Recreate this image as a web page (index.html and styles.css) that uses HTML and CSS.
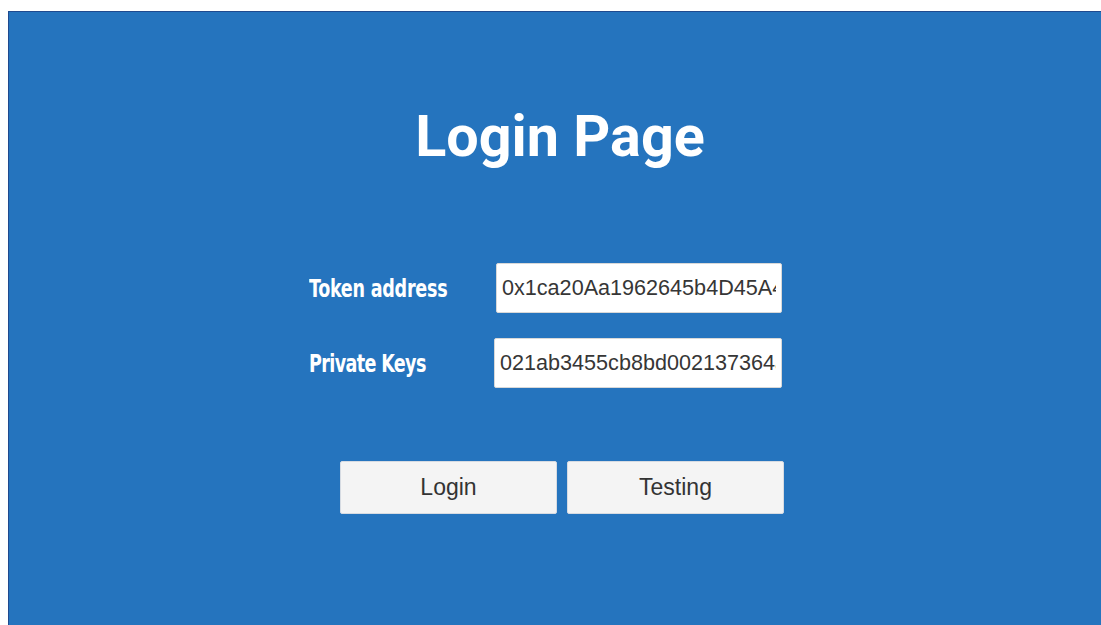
FILE: index.html
```html
<!DOCTYPE html>
<html lang="en">
<head>
<meta charset="utf-8">
<title>Login Page</title>
<link rel="stylesheet" href="styles.css">
</head>
<body>
  <main class="panel">
    <h1 class="title">Login Page</h1>
    <form class="form">
      <div class="row">
        <label class="label" for="token">Token address</label>
        <input class="field" id="token" type="text" value="0x1ca20Aa1962645b4D45A4c4f9d1b2e39f00">
      </div>
      <div class="row row-keys">
        <label class="label" for="keys">Private Keys</label>
        <input class="field" id="keys" type="text" value="021ab3455cb8bd002137364a9e">
      </div>
      <div class="actions">
        <button class="btn" type="button">Login</button>
        <button class="btn" type="button">Testing</button>
      </div>
    </form>
  </main>
</body>
</html>
```
FILE: styles.css
```css
html, body {
  height: 100%;
}

body {
  margin: 0;
  padding: 11px 0 0 8px;
  box-sizing: border-box;
  background: #ffffff;
  overflow: hidden;
}

.panel {
  height: 100%;
  box-sizing: border-box;
  background: #2574be;
  border-left: 1px solid #1f4a8f;
  border-top: 1px solid #1f4a8f;
  padding-top: 90px;
  display: flex;
  flex-direction: column;
}

.title {
  margin: 0;
  padding-left: 10px;
  text-align: center;
  font-family: Roboto, "Liberation Sans", sans-serif;
  font-weight: 700;
  font-size: 57.5px;
  line-height: 70px;
  color: #ffffff;
}

.form {
  margin: 91px 0 0 300px;
  display: flex;
  flex-direction: column;
  gap: 25px;
}

.row {
  display: flex;
  align-items: center;
  height: 50px;
}

.label {
  width: 187px;
  flex: none;
  display: block;
  font-family: "DejaVu Sans", sans-serif;
  font-stretch: condensed;
  font-weight: 700;
  font-size: 25px;
  letter-spacing: -0.3px;
  color: #ffffff;
  white-space: nowrap;
  transform: scaleX(0.78);
  transform-origin: left center;
}

.field {
  width: 286px;
  height: 50px;
  box-sizing: border-box;
  margin: 0;
  padding: 0 5px;
  border: 1px solid #d8d8d8;
  border-radius: 2px;
  background: #ffffff;
  font-family: "Liberation Sans", Arial, sans-serif;
  font-size: 21.6px;
  color: #363636;
  outline: none;
}

.row-keys .label {
  width: 185px;
  letter-spacing: -0.8px;
}

.row-keys .field {
  width: 288px;
}

.actions {
  margin: 48px 0 0 31px;
  display: flex;
  gap: 10px;
}

.btn {
  width: 217px;
  height: 53px;
  margin: 0;
  padding: 0;
  border: 1px solid #d6dbe2;
  border-radius: 2px;
  background: #f4f4f4;
  font-family: "Liberation Sans", Arial, sans-serif;
  font-size: 23px;
  color: #333333;
  cursor: pointer;
}
```
